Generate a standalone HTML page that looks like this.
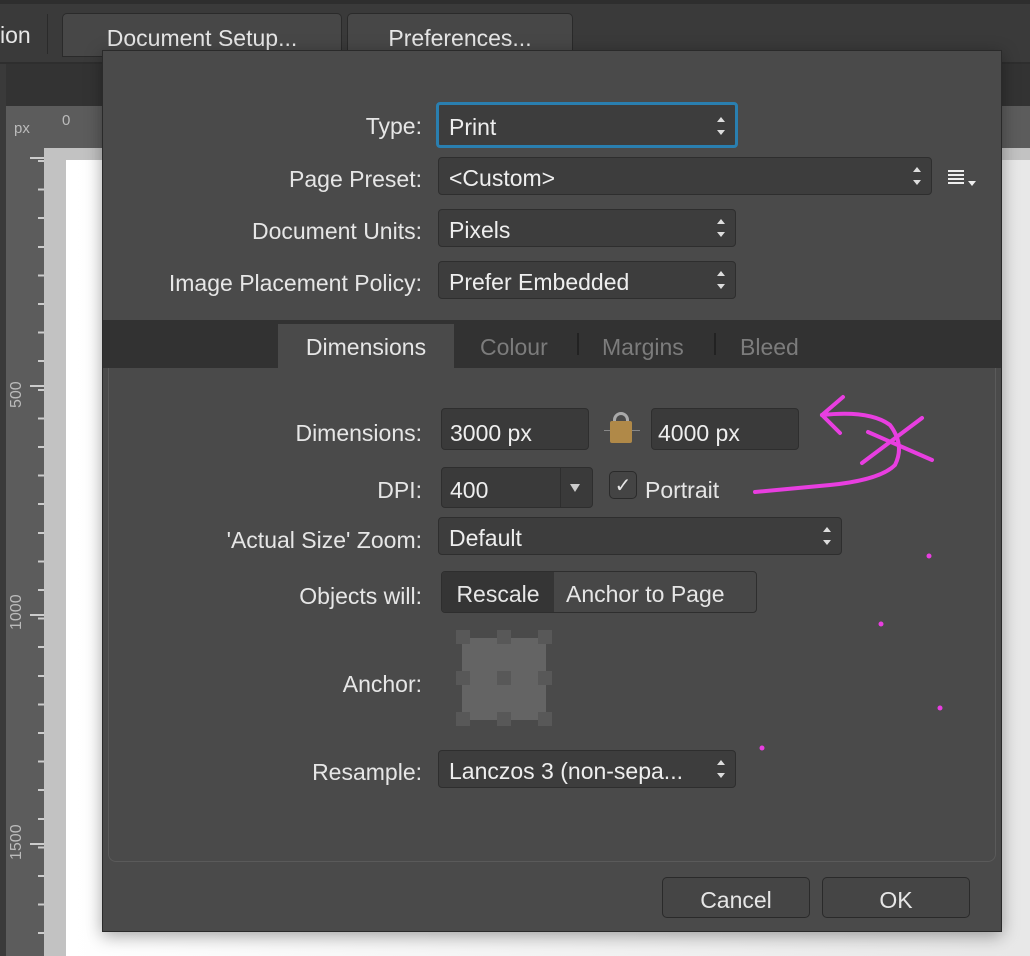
<!DOCTYPE html>
<html><head><meta charset="utf-8"><style>
*{box-sizing:border-box}
body{margin:0;width:1030px;height:956px;overflow:hidden;background:#3a3a3a;font-family:"Liberation Sans",sans-serif;color:#e6e6e6;position:relative}
.a{position:absolute}
.btn{position:absolute;border:1px solid #2a2a2a;border-radius:5px;background:#474747;text-align:center;font-size:23px}
.lbl{position:absolute;text-align:right;font-size:23px;width:422px;left:0}
.fld{position:absolute;background:#3d3d3d;border:1px solid #2e2e2e;border-radius:4px;font-size:23px;padding-left:10px;line-height:40px;height:38px;color:#eee}
.ud{position:absolute;right:10px;top:9px;width:8px;height:18px}
.ud:before{content:"";position:absolute;left:0;top:0;border:4px solid transparent;border-bottom:5px solid #ddd;border-top:0}
.ud:after{content:"";position:absolute;left:0;bottom:0;border:4px solid transparent;border-top:5px solid #ddd;border-bottom:0}
.h{position:absolute;width:14px;height:14px;background:#585858}
</style></head><body>
<div class="a" style="left:0;top:0;width:1030px;height:4px;background:#2e2e2e"></div>
<div class="a" style="left:0;top:22px;font-size:23px">ion</div>
<div class="a" style="left:47px;top:14px;width:1px;height:40px;background:#2a2a2a"></div>
<div class="btn" style="left:62px;top:13px;width:280px;height:44px;line-height:48px;border-radius:5px 5px 0 0">Document Setup...</div>
<div class="btn" style="left:347px;top:13px;width:226px;height:44px;line-height:48px;border-radius:5px 5px 0 0">Preferences...</div>
<div class="a" style="left:0;top:62px;width:1030px;height:2px;background:#2e2e2e"></div>
<div class="a" style="left:6px;top:64px;width:1024px;height:42px;background:#333"></div>
<div class="a" style="left:6px;top:106px;width:1024px;height:44px;background:#5c5c5c"></div>
<div class="a" style="left:6px;top:106px;width:38px;height:850px;background:#5c5c5c"></div>
<div class="a" style="left:14px;top:120px;font-size:15px;color:#bbb">px</div>
<div class="a" style="left:62px;top:112px;font-size:15px;color:#bbb">0</div>
<div class="a" style="left:44px;top:148px;width:1000px;height:12px;background:#c2c2c2"></div>
<div class="a" style="left:44px;top:148px;width:22px;height:808px;background:#c2c2c2"></div>
<div class="a" style="left:66px;top:160px;width:964px;height:796px;background:linear-gradient(90deg,#fff,#e8e8e8)"></div>
<div class="a" style="left:30px;top:157px;width:14px;height:2px;background:#ccc"></div>
<div class="a" style="left:30px;top:385px;width:14px;height:2px;background:#ccc"></div>
<div class="a" style="left:30px;top:614px;width:14px;height:2px;background:#ccc"></div>
<div class="a" style="left:30px;top:843px;width:14px;height:2px;background:#ccc"></div>
<div class="a" style="left:38px;top:160px;width:6px;height:796px;background:repeating-linear-gradient(180deg,#ccc 0 2px,transparent 2px 28.6px)"></div>
<div class="a" style="left:8px;font-size:16px;color:#bbb;transform:rotate(-90deg);transform-origin:0 0;top:408px">500</div>
<div class="a" style="left:8px;top:630px;font-size:16px;color:#bbb;transform:rotate(-90deg);transform-origin:0 0">1000</div>
<div class="a" style="left:8px;top:860px;font-size:16px;color:#bbb;transform:rotate(-90deg);transform-origin:0 0">1500</div>
<div class="a" style="left:102px;top:50px;width:900px;height:882px;background:#4a4a4a;border:1px solid #2a2a2a;box-shadow:0 4px 16px rgba(0,0,0,.35)"></div>
<div class="lbl" style="top:113px">Type:</div>
<div class="fld" style="left:436px;top:102px;width:302px;height:46px;border:3px solid #2a7fb0;line-height:44px">Print<span class="ud" style="top:12px"></span></div>
<div class="lbl" style="top:166px">Page Preset:</div>
<div class="fld" style="left:438px;top:157px;width:494px">&lt;Custom&gt;<span class="ud"></span></div>
<div class="a" style="left:948px;top:170px;width:16px;height:14px;background:repeating-linear-gradient(180deg,#eee 0 2px,transparent 2px 4px)"></div>
<div class="a" style="left:968px;top:181px;border:4px solid transparent;border-top:5px solid #eee"></div>
<div class="lbl" style="top:218px">Document Units:</div>
<div class="fld" style="left:438px;top:209px;width:298px">Pixels<span class="ud"></span></div>
<div class="lbl" style="top:270px">Image Placement Policy:</div>
<div class="fld" style="left:438px;top:261px;width:298px">Prefer Embedded<span class="ud"></span></div>
<div class="a" style="left:103px;top:320px;width:898px;height:48px;background:#323232"></div>
<div class="a" style="left:278px;top:324px;width:176px;height:44px;background:#4a4a4a;text-align:center;line-height:46px;font-size:23px">Dimensions</div>
<div class="a" style="left:480px;top:334px;font-size:23px;color:#7c7c7c">Colour</div>
<div class="a" style="left:577px;top:333px;width:2px;height:22px;background:#222"></div>
<div class="a" style="left:602px;top:334px;font-size:23px;color:#7c7c7c">Margins</div>
<div class="a" style="left:714px;top:333px;width:2px;height:22px;background:#222"></div>
<div class="a" style="left:740px;top:334px;font-size:23px;color:#7c7c7c">Bleed</div>
<div class="a" style="left:108px;top:368px;width:888px;height:494px;border:1px solid #5a5a5a;border-top:0;border-radius:0 0 8px 8px"></div>
<div class="lbl" style="top:420px">Dimensions:</div>
<div class="fld" style="left:441px;top:408px;width:148px;height:42px;line-height:48px;padding-left:8px;background:#3a3a3a">3000 px</div>
<div class="a" style="left:604px;top:430px;width:36px;height:1px;background:#888"></div>
<div class="a" style="left:613px;top:412px;width:16px;height:14px;border:3px solid #aaa;border-bottom:0;border-radius:8px 8px 0 0"></div>
<div class="a" style="left:610px;top:421px;width:22px;height:22px;background:#b08948;border-radius:2px"></div>
<div class="fld" style="left:651px;top:408px;width:148px;height:42px;line-height:48px;padding-left:6px;background:#3a3a3a">4000 px</div>
<div class="lbl" style="top:477px">DPI:</div>
<div class="fld" style="left:441px;top:467px;width:152px;height:41px;line-height:44px;padding-left:8px;background:#3a3a3a">400</div>
<div class="a" style="left:560px;top:468px;width:1px;height:39px;background:#2e2e2e"></div>
<div class="a" style="left:570px;top:484px;border:5px solid transparent;border-top:8px solid #ccc"></div>
<div class="a" style="left:609px;top:471px;width:28px;height:28px;border:1px solid #2a2a2a;border-radius:5px;background:#444;text-align:center;line-height:28px;font-size:20px">✓</div>
<div class="a" style="left:645px;top:477px;font-size:23px">Portrait</div>
<div class="lbl" style="top:527px">'Actual Size' Zoom:</div>
<div class="fld" style="left:438px;top:517px;width:404px">Default<span class="ud"></span></div>
<div class="lbl" style="top:583px">Objects will:</div>
<div class="a" style="left:441px;top:571px;width:316px;height:42px;border:1px solid #2e2e2e;border-radius:4px;background:#474747;font-size:23px;line-height:44px;overflow:hidden;white-space:nowrap">
<span style="display:inline-block;width:112px;background:#353535;text-align:center">Rescale</span><span style="padding-left:12px">Anchor to Page</span></div>
<div class="lbl" style="top:671px">Anchor:</div>
<div class="a" style="left:462px;top:638px;width:84px;height:82px;background:#646464"></div>
<div class="h" style="left:456px;top:630px"></div><div class="h" style="left:497px;top:630px"></div><div class="h" style="left:538px;top:630px"></div>
<div class="h" style="left:456px;top:671px"></div><div class="h" style="left:497px;top:671px"></div><div class="h" style="left:538px;top:671px"></div>
<div class="h" style="left:456px;top:712px"></div><div class="h" style="left:497px;top:712px"></div><div class="h" style="left:538px;top:712px"></div>
<div class="lbl" style="top:759px">Resample:</div>
<div class="fld" style="left:438px;top:750px;width:298px">Lanczos 3 (non-sepa...<span class="ud"></span></div>
<div class="btn" style="left:662px;top:877px;width:148px;height:41px;line-height:44px;background:#454545">Cancel</div>
<div class="btn" style="left:822px;top:877px;width:148px;height:41px;line-height:44px;background:#454545">OK</div>
<svg class="a" style="left:0;top:0" width="1030" height="956"><g fill="none" stroke="#e83ee0" stroke-width="4" stroke-linecap="round">
<path d="M822 415 Q870 410 890 425 Q905 445 895 465 Q880 480 830 485 L755 492"/>
<path d="M822 415 L843 397 M822 415 L840 433"/>
<path d="M922 418 L862 463 M868 432 L932 460"/></g>
<g fill="#e83ee0"><circle cx="929" cy="556" r="2.5"/><circle cx="881" cy="624" r="2.5"/><circle cx="940" cy="708" r="2.5"/><circle cx="762" cy="748" r="2.5"/></g></svg>
</body></html>
